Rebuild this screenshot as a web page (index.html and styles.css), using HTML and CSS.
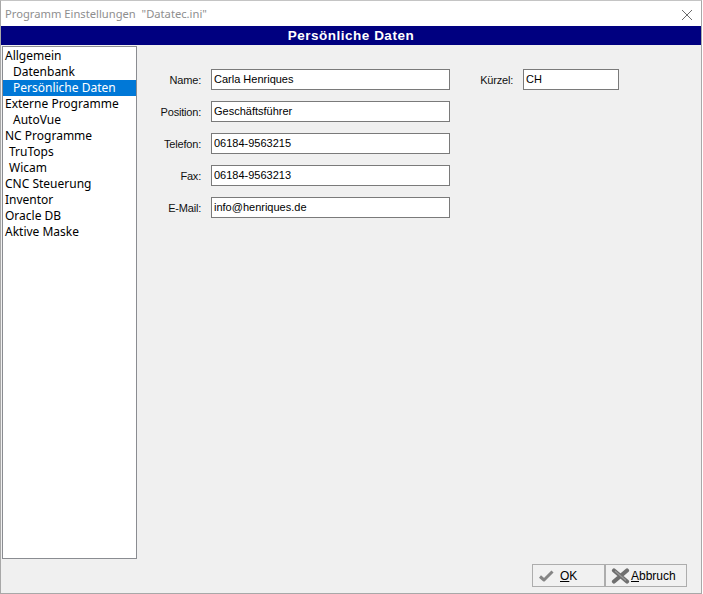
FILE: index.html
```html
<!DOCTYPE html>
<html lang="de">
<head>
<meta charset="utf-8">
<title>Programm Einstellungen</title>
<link rel="stylesheet" href="styles.css">
</head>
<body>
<div class="window">
  <div class="titlebar">
    <span class="title">Programm Einstellungen&nbsp; "Datatec.ini"</span>
    <svg class="close" width="12" height="12" viewBox="0 0 12 12"><path d="M1 1 L11 11 M11 1 L1 11" stroke="#6b6b6b" stroke-width="1" fill="none"/></svg>
  </div>
  <div class="banner">Persönliche Daten</div>
  <div class="content">
    <div class="main">
      <ul class="tree">
        <li class="lvl0">Allgemein</li>
        <li class="lvl1">Datenbank</li>
        <li class="lvl1 selected">Persönliche Daten</li>
        <li class="lvl0">Externe Programme</li>
        <li class="lvl1">AutoVue</li>
        <li class="lvl0">NC Programme</li>
        <li class="lvl2">TruTops</li>
        <li class="lvl2">Wicam</li>
        <li class="lvl0">CNC Steuerung</li>
        <li class="lvl0">Inventor</li>
        <li class="lvl0">Oracle DB</li>
        <li class="lvl0">Aktive Maske</li>
      </ul>
      <div class="form">
        <label class="lbl">Name:</label>
        <input class="field" type="text" value="Carla Henriques">
        <label class="lbl">Kürzel:</label>
        <input class="field short" type="text" value="CH">

        <label class="lbl">Position:</label>
        <input class="field" type="text" value="Geschäftsführer">
        <span></span><span></span>

        <label class="lbl">Telefon:</label>
        <input class="field" type="text" value="06184-9563215">
        <span></span><span></span>

        <label class="lbl">Fax:</label>
        <input class="field" type="text" value="06184-9563213">
        <span></span><span></span>

        <label class="lbl">E-Mail:</label>
        <input class="field" type="text" value="info@henriques.de">
        <span></span><span></span>
      </div>
    </div>
    <div class="footer">
      <button class="btn btn-ok" type="button">
        <svg class="ico" width="16" height="12" viewBox="0 0 16 12"><path d="M2 6.5 L6 10 L14.5 1.5" stroke="#858585" stroke-width="3" fill="none" stroke-linejoin="round"/></svg>
        <span><u>O</u>K</span>
      </button>
      <button class="btn btn-cancel" type="button">
        <svg class="ico" width="19" height="16" viewBox="0 0 19 16"><path d="M3 2.5 L16 13.5 M16 2.5 L3 13.5" stroke="#6f6f6f" stroke-width="4.2" fill="none" stroke-linecap="round"/><path d="M4 3 L15 12.5" stroke="#9a9a9a" stroke-width="1.2" fill="none"/></svg>
        <span><u>A</u>bbruch</span>
      </button>
    </div>
  </div>
</div>
</body>
</html>
```
FILE: styles.css
```css
html, body {
  margin: 0;
  padding: 0;
  background: #ffffff;
}
body {
  width: 703px;
  height: 594px;
  overflow: hidden;
}
.window {
  width: 700px;
  height: 592px;
  border: 1px solid #a8a8a8;
  border-top-color: #c4c4c4;
  display: flex;
  flex-direction: column;
  background: #f0f0f0;
}
.titlebar {
  height: 25px;
  background: #ffffff;
  display: flex;
  align-items: center;
  justify-content: space-between;
  padding: 0 8px 0 4px;
}
.title {
  font-family: "Noto Sans", "Open Sans", sans-serif;
  font-size: 11.2px;
  color: #8e8e8e;
  white-space: pre;
}
.close {
  display: block;
  margin-top: 2px;
}
.banner {
  height: 19px;
  background: #000080;
  color: #ffffff;
  font-family: "Liberation Sans", Arial, sans-serif;
  font-weight: bold;
  font-size: 13.5px;
  letter-spacing: 0.5px;
  line-height: 19px;
  text-align: center;
}
.content {
  flex: 1;
  display: flex;
  flex-direction: column;
}
.main {
  height: 514px;
  display: flex;
}
.tree {
  list-style: none;
  margin: 1px 0 0 1px;
  padding: 1px 0 0 0;
  width: 133px;
  height: 510px;
  border: 1px solid #8a8c91;
  background: #ffffff;
  font-family: "Noto Sans", "Open Sans", sans-serif;
  font-size: 12px;
  color: #000000;
}
.tree li {
  height: 16px;
  line-height: 16px;
  padding-left: 2px;
  white-space: nowrap;
}
.tree li.lvl1 { padding-left: 10px; }
.tree li.lvl2 { padding-left: 6px; }
.tree li.selected {
  background: #0078d7;
  color: #ffffff;
}
.form {
  margin-left: 4px;
  padding-top: 24px;
  display: grid;
  grid-template-columns: 60px 239px 53px 96px;
  grid-auto-rows: 21px;
  column-gap: 10px;
  row-gap: 11px;
  align-content: start;
  align-items: center;
}
.lbl {
  font-family: "Liberation Sans", Arial, sans-serif;
  font-size: 11px;
  letter-spacing: -0.2px;
  color: #111111;
  text-align: right;
  white-space: nowrap;
}
.field {
  box-sizing: border-box;
  width: 100%;
  height: 21px;
  margin: 0;
  border: 1px solid #7a7a7a;
  background: #ffffff;
  padding: 0 2px 2px 2px;
  font-family: "Liberation Sans", Arial, sans-serif;
  font-size: 11px;
  color: #000000;
  outline: none;
}
.footer {
  margin-top: 5px;
  display: flex;
  justify-content: flex-end;
  padding-right: 14px;
}
.btn {
  box-sizing: border-box;
  height: 23px;
  margin: 0;
  border: 1px solid #adadad;
  background: #f1f1f1;
  display: flex;
  align-items: center;
  padding: 0;
  font-family: "Liberation Sans", Arial, sans-serif;
  font-size: 12px;
  color: #000000;
}
.btn u { text-decoration: underline; }
.btn-ok {
  width: 73px;
  padding-left: 5px;
  gap: 6px;
}
.btn-cancel {
  width: 82px;
  padding-left: 5px;
  gap: 1px;
}
.ico { display: block; }
```
